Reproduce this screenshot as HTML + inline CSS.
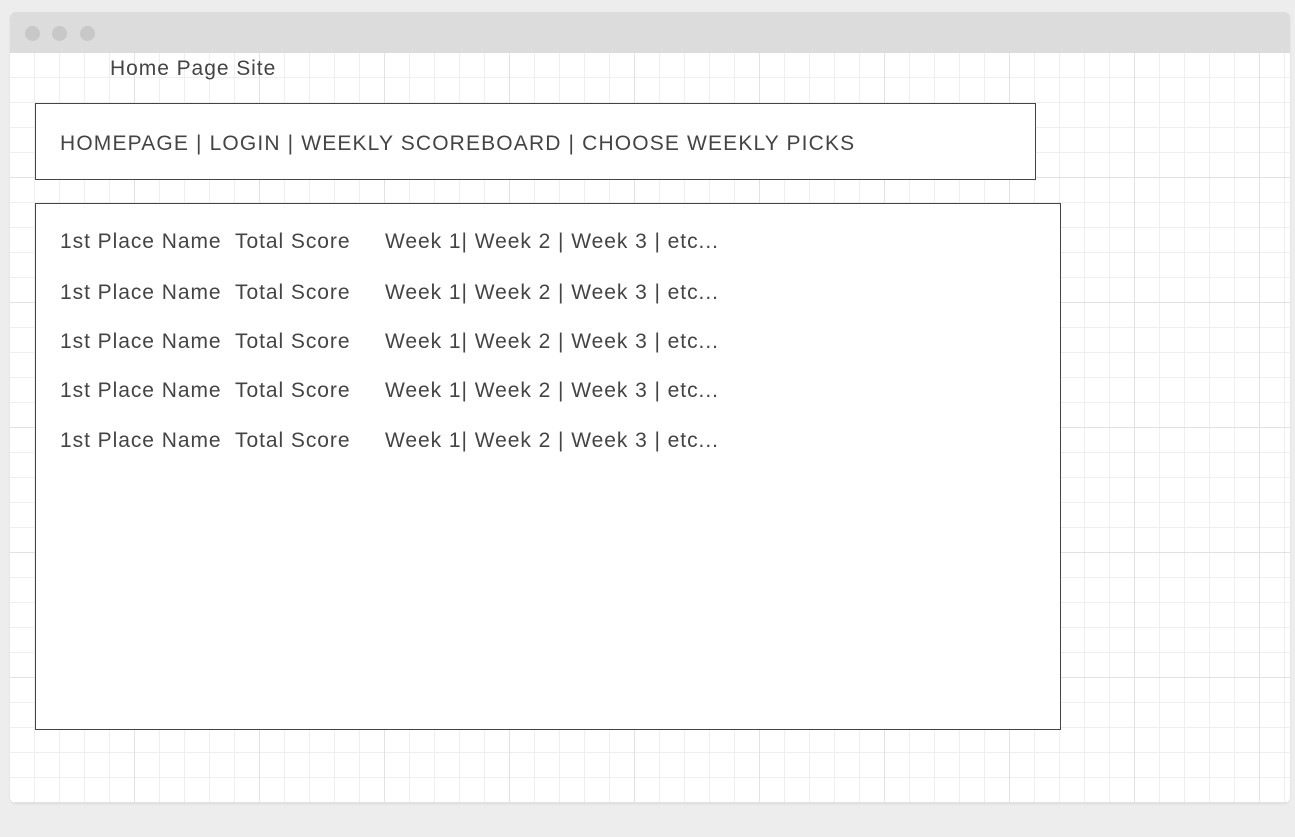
<!DOCTYPE html>
<html><head><style>
body{margin:0;width:1295px;height:837px;background:#ededed;position:relative;overflow:hidden;font-family:"Liberation Sans",Arial,sans-serif;color:#444}
.win{position:absolute;left:10px;top:12px;width:1280px;height:791px;border-radius:6px;overflow:hidden;background:#fff;box-shadow:0 1px 2px rgba(0,0,0,.08)}
.bar{position:absolute;left:0;top:0;width:100%;height:41px;background:#dcdcdc}
.dot{position:absolute;top:14px;width:15px;height:15px;border-radius:50%;background:#c8c8c8}
.grid{position:absolute;left:0;top:41px;width:100%;height:750px;
background-image:
linear-gradient(to right,transparent 124px,#e2e2e2 124px,#e2e2e2 125px),
linear-gradient(to bottom,transparent 124px,#e2e2e2 124px,#e2e2e2 125px),
linear-gradient(to right,transparent 24px,#efefef 24px,#efefef 25px),
linear-gradient(to bottom,transparent 24px,#efefef 24px,#efefef 25px);
background-size:125px 125px,125px 125px,25px 25px,25px 25px}
.t{position:absolute;font-size:21px;letter-spacing:0.95px;white-space:nowrap;line-height:1}
.box{position:absolute;border:1px solid #444;background:#fff;box-sizing:border-box}
</style></head><body>
<div class="win">
<div class="bar"><div class="dot" style="left:15px"></div><div class="dot" style="left:42px"></div><div class="dot" style="left:70px"></div></div>
<div class="grid"></div>
</div>
<div class="t" style="left:110px;top:58px">Home Page Site</div>
<div class="box" style="left:35px;top:103px;width:1001px;height:77px"></div>
<div class="t" style="left:60px;top:133px;letter-spacing:1.15px">HOMEPAGE | LOGIN | WEEKLY SCOREBOARD | CHOOSE WEEKLY PICKS</div>
<div class="box" style="left:35px;top:203px;width:1026px;height:527px"></div>
<div class="t" style="left:60px;top:231px">1st Place Name</div><div class="t" style="left:235px;top:231px">Total Score</div><div class="t" style="left:385px;top:231px">Week 1| Week 2 | Week 3 | etc...</div>
<div class="t" style="left:60px;top:282px">1st Place Name</div><div class="t" style="left:235px;top:282px">Total Score</div><div class="t" style="left:385px;top:282px">Week 1| Week 2 | Week 3 | etc...</div>
<div class="t" style="left:60px;top:331px">1st Place Name</div><div class="t" style="left:235px;top:331px">Total Score</div><div class="t" style="left:385px;top:331px">Week 1| Week 2 | Week 3 | etc...</div>
<div class="t" style="left:60px;top:380px">1st Place Name</div><div class="t" style="left:235px;top:380px">Total Score</div><div class="t" style="left:385px;top:380px">Week 1| Week 2 | Week 3 | etc...</div>
<div class="t" style="left:60px;top:430px">1st Place Name</div><div class="t" style="left:235px;top:430px">Total Score</div><div class="t" style="left:385px;top:430px">Week 1| Week 2 | Week 3 | etc...</div>
</body></html>
